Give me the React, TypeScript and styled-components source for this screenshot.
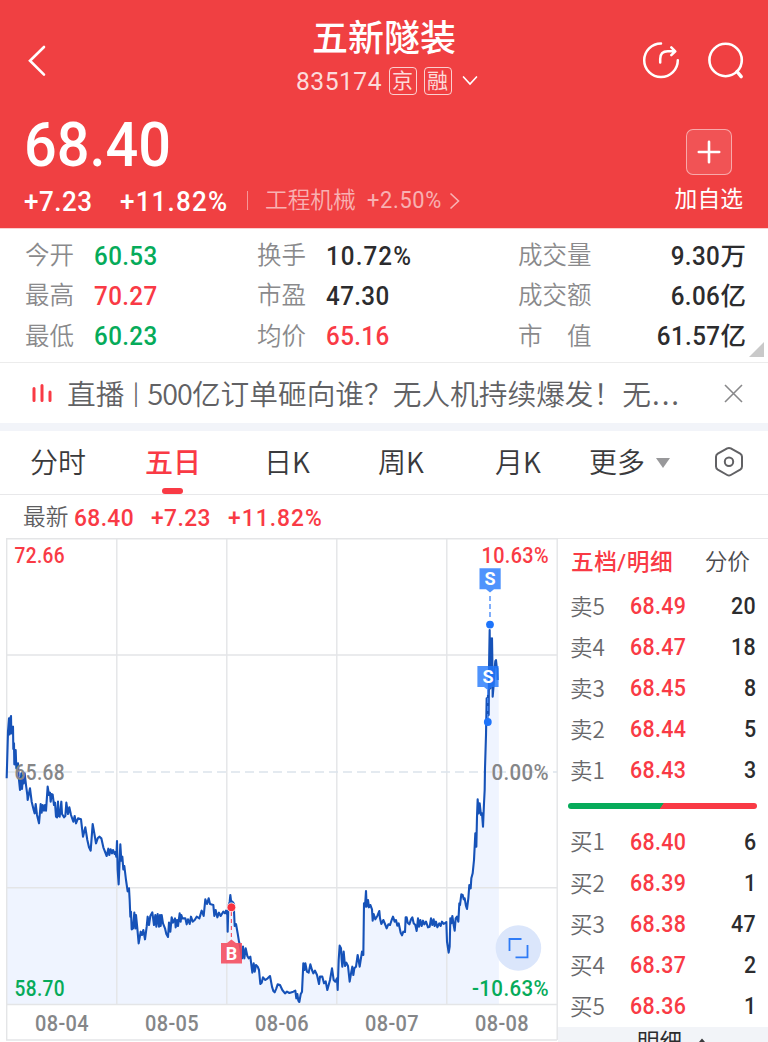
import React from 'react';
import styled, { createGlobalStyle } from 'styled-components';

const RED = '#f93a45';
const GREEN = '#06ab5a';
const INK = '#2c2c2e';

const GlobalStyle = createGlobalStyle`
  body {
    margin: 0;
    background: #fff;
    font-family: Roboto, 'Noto Sans CJK SC', sans-serif;
    line-height: 1.3;
    color: ${INK};
  }
`;

const Page = styled.main`
  width: 768px;
  height: 1042px;
  overflow: hidden;
  display: flex;
  flex-direction: column;
  white-space: nowrap;
`;

interface NumProps {
  $size: number;
  $color?: string;
  $weight?: number;
  $track?: number;
  $width?: number;
  $end?: boolean;
}

/* Slightly narrowed numerals. */
const Num = styled.span<NumProps>`
  display: inline-block;
  flex-shrink: 0;
  width: ${(p) => (p.$width ? `${p.$width}px` : 'auto')};
  font-family: Roboto, 'Noto Sans CJK SC', sans-serif;
  font-size: ${(p) => p.$size}px;
  font-weight: ${(p) => p.$weight ?? 500};
  letter-spacing: ${(p) => p.$track ?? 0.016}em;
  color: ${(p) => p.$color ?? 'inherit'};
  transform: scaleX(0.93);
  transform-origin: ${(p) => (p.$end ? 'right' : 'left')} center;
`;

const Unit = styled.span`
  font-size: 25.5px;
  font-weight: 500;
`;

/* ---------- Header ---------- */

const Header = styled.header`
  height: 228px;
  box-sizing: border-box;
  background: #f04042;
  color: #fff;
  box-shadow: 0 1px 0 #fbcfcf;
  display: flex;
  flex-direction: column;
  flex-shrink: 0;
`;

const TopBar = styled.div`
  height: 115px;
  display: grid;
  grid-template-columns: 160px 1fr 160px;
`;

const BackButton = styled.div`
  padding: 44px 0 0 26px;
`;

const TitleBlock = styled.div`
  display: flex;
  flex-direction: column;
  align-items: center;
  padding-top: 14px;
`;

const Title = styled.h1`
  margin: 0;
  font-size: 36px;
  line-height: 50px;
  font-weight: 500;
`;

const CodeRow = styled.div`
  display: flex;
  align-items: center;
  height: 34px;
  padding-left: 5px;
  color: rgba(255, 255, 255, 0.82);
`;

const Badge = styled.span`
  box-sizing: border-box;
  width: 28px;
  height: 28px;
  margin-left: 7px;
  border: 1px solid rgba(255, 255, 255, 0.75);
  border-radius: 4px;
  font-size: 21px;
  line-height: 27px;
  text-align: center;
`;

const TopActions = styled.div`
  display: flex;
  gap: 26px;
  padding: 41px 0 0 33px;
`;

const QuoteBlock = styled.div`
  display: flex;
  justify-content: space-between;
  padding: 0 25px 0 24px;
`;

const PriceColumn = styled.div`
  display: flex;
  flex-direction: column;
`;

const Price = styled(Num)`
  line-height: 60px;
`;

const ChangeRow = styled.div`
  display: flex;
  align-items: center;
  height: 30px;
  margin-top: 12px;
`;

const Sector = styled.div`
  display: flex;
  align-items: center;
  margin-bottom: 3px;
  padding-left: 18px;
  font-size: 22.7px;
  font-weight: 350;
  color: rgba(255, 255, 255, 0.6);
  background: linear-gradient(rgba(255, 255, 255, 0.45), rgba(255, 255, 255, 0.45)) left center / 1px 19px no-repeat;
`;

const SectorName = styled.span`
  width: 102px;
`;

const AddColumn = styled.div`
  display: flex;
  flex-direction: column;
  align-items: center;
  padding-top: 14px;
`;

const AddButton = styled.div`
  box-sizing: border-box;
  width: 46px;
  height: 46px;
  display: grid;
  place-items: center;
  background: rgba(255, 255, 255, 0.1);
  border: 1px solid rgba(255, 255, 255, 0.5);
  border-radius: 7px;
`;

const AddLabel = styled.div`
  margin-top: 9px;
  font-size: 22.8px;
  line-height: 32px;
`;

/* ---------- Stats ---------- */

const Stats = styled.section`
  position: relative;
  box-sizing: border-box;
  height: 135px;
  flex-shrink: 0;
  display: grid;
  grid-template-columns: 232px 261px 228px;
  padding: 8px 0 0 25px;
  border-bottom: 1px solid #ececec;
`;

const StatColumn = styled.div`
  display: flex;
  flex-direction: column;
`;

const StatRow = styled.div`
  height: 40.2px;
  display: flex;
  align-items: center;
  & > ${Num} {
    padding-top: 1px;
  }
`;

const StatLabel = styled.span<{ $width: number; $grow: boolean }>`
  width: ${(p) => p.$width}px;
  flex-grow: ${(p) => (p.$grow ? 1 : 0)};
  font-size: 24.5px;
  font-weight: 350;
  color: #8a8a8c;
  white-space: pre;
`;

const Corner = styled.div`
  position: absolute;
  right: 4px;
  bottom: 5px;
  width: 15px;
  height: 15px;
  background: #c9c9c9;
  clip-path: polygon(100% 0, 100% 100%, 0 100%);
`;

/* ---------- News ---------- */

const News = styled.section`
  box-sizing: border-box;
  height: 68px;
  flex-shrink: 0;
  display: flex;
  align-items: center;
  padding: 0 25px 0 32px;
  border-bottom: 8px solid #f2f4f9;
`;

const NewsText = styled.div`
  display: flex;
  width: 640px;
  margin: 0 auto 1px 14px;
  font-family: 'Noto Sans CJK SC', sans-serif;
  font-size: 28.7px;
  line-height: 40px;
  font-weight: 350;
  color: #616164;
`;

const NewsBar = styled.span`
  width: 23px;
  font-size: 22px;
  line-height: 37px;
  font-weight: 400;
  text-align: center;
`;

const NewsDigits = styled.span`
  letter-spacing: -0.9px;
`;

const Dots = styled.span`
  margin-left: 1px;
  letter-spacing: 2px;
`;

/* ---------- Tabs ---------- */

const Tabs = styled.nav`
  box-sizing: border-box;
  height: 64px;
  flex-shrink: 0;
  display: flex;
  padding-left: 30px;
  border-bottom: 1px solid #e8e8ea;
`;

const Tab = styled.div<{ $width: number; $active?: boolean }>`
  width: ${(p) => p.$width}px;
  padding-bottom: 3px;
  font-family: 'Noto Sans CJK SC', sans-serif;
  font-size: 28px;
  line-height: 60px;
  font-weight: ${(p) => (p.$active ? 500 : 350)};
  color: ${(p) => (p.$active ? RED : '#3a3a3c')};
  display: flex;
  align-items: center;
`;

const ActiveLabel = styled.span`
  position: relative;
  &::after {
    content: '';
    position: absolute;
    left: 17px;
    bottom: -3px;
    width: 21px;
    height: 6px;
    border-radius: 3px;
    background: ${RED};
  }
`;

const Caret = styled.i`
  margin: 3px 0 0 11px;
  border: 7px solid transparent;
  border-top: 10px solid #98989a;
  border-bottom: 0;
`;

const LatestRow = styled.div`
  height: 43px;
  flex-shrink: 0;
  display: flex;
  align-items: center;
  padding: 2px 0 0 23px;
  box-sizing: border-box;
`;

const LatestLabel = styled.span`
  width: 50.5px;
  font-size: 22.7px;
  font-weight: 350;
  color: #5d5d60;
`;

/* ---------- Chart and order book ---------- */

const Board = styled.section`
  display: flex;
  height: 504px;
  flex-shrink: 0;
`;

const Book = styled.aside`
  box-sizing: border-box;
  width: 210px;
  border-top: 1px solid #e8e8ea;
  display: flex;
  flex-direction: column;
`;

const BookTabs = styled.div`
  height: 47px;
  padding: 0 18px 0 13px;
  display: flex;
  align-items: center;
  justify-content: space-between;
  font-size: 22.7px;
`;

const BookTab = styled.span<{ $active?: boolean }>`
  font-weight: ${(p) => (p.$active ? 500 : 350)};
  letter-spacing: ${(p) => (p.$active ? 0.5 : 0)}px;
  color: ${(p) => (p.$active ? RED : '#4c4c4f')};
`;

const BookRow = styled.div`
  height: 41.3px;
  box-sizing: border-box;
  display: grid;
  grid-template-columns: 60px 1fr auto;
  align-items: center;
  padding: 1px 12px 0 12px;
`;

const Side = styled.span`
  padding-bottom: 4px;
  font-family: 'Noto Sans CJK SC', sans-serif;
  font-size: 22.5px;
  line-height: 30px;
  font-weight: 350;
  color: #69696c;
`;

const Ratio = styled.div`
  height: 6px;
  margin: 12px 11px 12px 10px;
  border-radius: 3px;
  background: linear-gradient(124deg, ${GREEN} 49.4%, ${RED} 49.8%);
`;

const BookFooter = styled.div`
  margin-top: auto;
  height: 15px;
  overflow: hidden;
  background: #f2f4f8;
  padding-left: 79px;
  font-size: 22.5px;
  line-height: 31px;
  display: flex;
  gap: 14px;
`;

type Stat = { label: string; value: string; unit?: string; color?: string; track?: number };

const STAT_COLUMNS: Stat[][] = [
  [
    { label: '今开', value: '60.53', color: GREEN },
    { label: '最高', value: '70.27', color: RED },
    { label: '最低', value: '60.23', color: GREEN },
  ],
  [
    { label: '换手', value: '10.72%', track: 0.045 },
    { label: '市盈', value: '47.30' },
    { label: '均价', value: '65.16', color: RED },
  ],
  [
    { label: '成交量', value: '9.30', unit: '万' },
    { label: '成交额', value: '6.06', unit: '亿' },
    { label: '市　值', value: '61.57', unit: '亿' },
  ],
];

const SELLS = [['卖5', '68.49', '20'], ['卖4', '68.47', '18'], ['卖3', '68.45', '8'], ['卖2', '68.44', '5'], ['卖1', '68.43', '3']];
const BUYS = [['买1', '68.40', '6'], ['买2', '68.39', '1'], ['买3', '68.38', '47'], ['买4', '68.37', '2'], ['买5', '68.36', '1']];

/* Price samples, in thirds of a pixel, grouped by chart section. */
type Section = { x: number; y: number; points: number[] };
const SECTIONS: Section[] = [
  { x: 0, y: 0, points: [20,730,24,590,27,550,29,598,31,550,33,543,34,595,36,580,39,575,40,642,42,625,43,688,47,645,49,700,54,685,56,725,60,765,64,715,66,762,69,722,71,745,74,715,78,750,82,780] },
  { x: 0, y: 765, points: [83,30,90,-5,95,35,101,60,104,70,107,42,111,75,117,100,122,42,125,68,128,45,132,62,135,45,138,62,143,-10,147,15,150,8,152,35,155,12,158,14,162,45,165,38,168,80,171,82,174,35,176,78,179,80,184,35,186,72,192,82,196,78,199,38,204,72,208,52,213,75,220,95,224,78,228,100,234,85,243,88,249,140,256,112,262,150,267,172,272,182,278,102,283,130,288,160,293,145,298,140,304,145,310,172,320,198,325,176,328,195,332,178,336,190,339,180,344,192,346,186,349,200,351,153,353,240,356,283,361,163,364,212,367,200,370,238,373,228,378,270,383,304,387,295,389,330,391,380,393,365,395,418,399,415,403,368,406,415,408,375,412,415,416,460,422,425,426,435,430,420,435,448,440,410,443,380,447,405,451,378,457,367,462,405,466,375,469,410,473,372,477,410,480,375,482,408,485,375,489,400,495,415,499,432,504,441,507,398,511,425,515,382,519,398,525,385,527,412,531,390,534,408,539,370,542,395,544,375,547,385,556,385,560,403,564,388,569,402,573,380,578,395,584,390,590,380,598,385,605,362,611,378,616,328,621,342,626,325,630,342,640,345,643,378,647,360,652,382,657,368,662,378,670,365,675,370,678,362,682,375,683,425,685,350,689,335,691,315,694,340,697,335,701,340,704,408,708,402,713,430,717,455] },
  { x: 660, y: 765, points: [58,458,62,480,66,505,69,470,73,505,77,475,82,498,86,505,91,500,97,548,101,520,104,545,108,525,113,530,117,540,121,582,125,578,129,562,136,570,143,565,150,558,156,590,160,603,164,607,169,595,173,583,180,585,187,600,195,610,201,605,208,609,220,605,226,602,229,625,232,612,235,632,238,636,242,613,246,605,250,520,254,540,256,520,261,545,266,548,271,523,276,540,280,550,285,542,291,555,297,582,300,560,307,560,312,580,317,574,322,600,330,570,336,535,341,570,346,575,351,565,353,600,356,510,359,467,363,475,365,510,367,530,371,485,375,528,379,518,384,528,389,575,394,545,397,530,400,555,403,535,408,530,413,495,419,530,426,485,430,495,432,340,435,350,438,303,440,350,444,330,447,352,451,345,456,358,458,392,461,372,466,388,472,378,478,363,480,385,484,402,490,390,495,402,500,415,505,403,510,405,515,390,519,380,524,395,528,390,532,407,536,400,542,428,546,436,550,425,555,426] },
  { x: 1200, y: 765, points: [17,382,20,382,23,398,28,403,33,388,37,382,41,400,46,405,50,423,54,385,57,410,61,390,65,408,69,392,73,403,78,395,84,412,89,410,93,385,97,405,101,388,104,408,108,395,112,412,118,400,122,408,126,395,131,402,139,396,141,455,146,488,149,470,151,385,154,400,157,378,161,405,164,422,167,385,171,380,175,395,178,340,180,345,184,313,188,315,191,328,194,325,198,348,201,357,205,325,208,285,212,295,214,265,218,250,222,210,226,130,229,170,231,80,233,28,236,70,239,40,243,75,246,70,249,110,252,40,254,0] },
  { x: 1200, y: 0, points: [255,700,258,600,260,490,262,565,264,480,266,540,267,400,269,285,271,460,272,310,274,450,276,310,277,370,278,485,281,450,284,400,286,378,288,375,290,395,292,400,293,435] },
];

const LINE = SECTIONS.flatMap((s) => {
  const out: string[] = [];
  for (let i = 0; i < s.points.length; i += 2) {
    out.push(`${((s.x + s.points[i]) / 3).toFixed(2)},${(535 + (s.y + s.points[i + 1]) / 3).toFixed(2)}`);
  }
  return out;
}).join(' ');

const AxisText = styled.text`
  font-family: Roboto, sans-serif;
  font-size: 21.2px;
  font-weight: 500;
  letter-spacing: 0.4px;
`;

const MarkText = styled.text`
  font-family: Roboto, sans-serif;
  font-size: 18px;
  font-weight: 700;
  text-anchor: middle;
  fill: #fff;
`;

function AxisLabel({ x, y, width, color, children }: { x: number; y: number; width: number; color: string; children: string }) {
  return (
    <AxisText x={x} y={y} fill={color} textLength={width} lengthAdjust="spacingAndGlyphs">
      {children}
    </AxisText>
  );
}

function FiveDayChart() {
  return (
    <svg width="558" height="504" viewBox="0 538 558 504">
      <polygon points={`6.5,1004 ${LINE} 498.7,745 498.7,1004`} fill="#eff4ff" />
      <rect x="490" y="690" width="8.7" height="314" fill="#eff4ff" />
      <g stroke="#e4e5e7" strokeWidth="1.4" fill="none">
        <path d="M6 538.7H558M6 655H557M6 887.7H557M6 1004.5H557M6 1040H557" />
        <path d="M6.7 538V1040M116.8 538V1004M226.8 538V1004M336.8 538V1004M446.8 538V1004M557.2 538V1040" />
      </g>
      <path d="M7 772H557" stroke="#dbe3ec" strokeWidth="1.6" strokeDasharray="9 5" />
      <polyline points={LINE} fill="none" stroke="#1652b8" strokeWidth="2.1" strokeLinejoin="round" />

      <AxisLabel x={14.5} y={563.3} width={50.5} color={RED}>72.66</AxisLabel>
      <AxisLabel x={481.5} y={563.3} width={67.5} color={RED}>10.63%</AxisLabel>
      <AxisLabel x={14.5} y={779.9} width={50.5} color="#858688">65.68</AxisLabel>
      <AxisLabel x={491.5} y={779.9} width={57.5} color="#858688">0.00%</AxisLabel>
      <AxisLabel x={14.5} y={996.3} width={50.5} color={GREEN}>58.70</AxisLabel>
      <AxisLabel x={472} y={996.3} width={77} color={GREEN}>-10.63%</AxisLabel>
      {['08-04', '08-05', '08-06', '08-07', '08-08'].map((d, i) => (
        <AxisLabel key={d} x={35 + i * 110} y={1031} width={54} color="#858688">{d}</AxisLabel>
      ))}

      <path d="M490 596V620" stroke="#4a8cf8" strokeWidth="1.4" strokeDasharray="5 3" />
      <path d="M487.7 690V718" stroke="#4a8cf8" strokeWidth="1.2" strokeDasharray="5 3" />
      <circle cx="490" cy="624.6" r="3.9" fill="#1e74fa" />
      <circle cx="487.8" cy="722" r="3.9" fill="#1e74fa" />
      <path d="M479.5 568.3H500.7V589.3H494L490 592.5L486 589.3H479.5Z" fill="#2378fb" fillOpacity="0.8" />
      <MarkText x="490.1" y="585.3">S</MarkText>
      <path d="M477.4 666H498.6V687H492L488 690.2L484 687H477.4Z" fill="#2378fb" fillOpacity="0.8" />
      <MarkText x="488" y="683">S</MarkText>

      <path d="M231.4 912V939" stroke="#f4566a" strokeWidth="1.2" strokeDasharray="4 3" />
      <circle cx="231.4" cy="907.3" r="4.4" fill="#f93340" stroke="#fff" strokeWidth="0.8" />
      <path d="M221 943H227L231.4 939.5L236 943H242V963.6H221Z" fill="#f54a5c" fillOpacity="0.88" />
      <MarkText x="231.4" y="959.6">B</MarkText>

      <circle cx="518.4" cy="948" r="22.8" fill="#dbe6fb" />
      <path d="M509.5 951V939H521.5M527.5 945V957.3H515.5" stroke="#2f7bf6" strokeWidth="1.8" fill="none" />
    </svg>
  );
}

function BookRows({ rows }: { rows: string[][] }) {
  return (
    <>
      {rows.map(([side, price, qty]) => (
        <BookRow key={side}>
          <Side>{side}</Side>
          <Num $size={23} $color={RED}>{price}</Num>
          <Num $size={23} $end>{qty}</Num>
        </BookRow>
      ))}
    </>
  );
}

export default function App() {
  return (
    <Page>
      <GlobalStyle />
      <Header>
        <TopBar>
          <BackButton>
            <svg width="22" height="34" viewBox="0 0 22 34" fill="none" stroke="#fff" strokeWidth="2.6" strokeLinecap="round">
              <path d="M18 3L4 16.8L18 30.6" />
            </svg>
          </BackButton>
          <TitleBlock>
            <Title>五新隧装</Title>
            <CodeRow>
              <Num $size={26.5} $weight={400} $width={86} $track={0.02}>835174</Num>
              <Badge>京</Badge>
              <Badge>融</Badge>
              <svg width="16" height="12" viewBox="0 0 16 12" fill="none" stroke="#fff" strokeWidth="1.7" strokeLinecap="round" style={{ marginLeft: 10 }}>
                <path d="M1.5 2L8 9L14.5 2" />
              </svg>
            </CodeRow>
          </TitleBlock>
          <TopActions>
            <svg width="40" height="40" viewBox="0 0 40 40" fill="none" stroke="#fff" strokeWidth="2.5" strokeLinecap="round" strokeLinejoin="round">
              <path d="M20 2.5A16.8 16.8 0 1 0 36.8 19.3" />
              <path d="M19.2 21.6V18Q19.2 10.3 26.8 10.3H34M30.3 6.3L34.3 10.3L30.3 14.1" />
            </svg>
            <svg width="40" height="40" viewBox="0 0 40 40" fill="none" stroke="#fff" strokeWidth="2.6" strokeLinecap="round">
              <circle cx="18.6" cy="19" r="16.2" />
              <path d="M30 30.5L34.2 35.6" strokeWidth="3.4" />
            </svg>
          </TopActions>
        </TopBar>
        <QuoteBlock>
          <PriceColumn>
            <Price $size={62} $track={0}>68.40</Price>
            <ChangeRow>
              <Num $size={28} $width={96} $track={0.018}>+7.23</Num>
              <Num $size={28} $width={127} $track={0.045}>+11.82%</Num>
              <Sector>
                <SectorName>工程机械</SectorName>
                <Num $size={23.5} $weight={400} $width={82} $track={0.03}>+2.50%</Num>
                <svg width="12" height="18" viewBox="0 0 12 18" fill="none" stroke="currentColor" strokeWidth="1.6">
                  <path d="M1.5 1.5L9.5 9L1.5 16.5" />
                </svg>
              </Sector>
            </ChangeRow>
          </PriceColumn>
          <AddColumn>
            <AddButton>
              <svg width="24" height="24" viewBox="0 0 24 24" stroke="#fff" strokeWidth="2.6" strokeLinecap="round">
                <path d="M12 1.8V22.2M1.8 12H22.2" />
              </svg>
            </AddButton>
            <AddLabel>加自选</AddLabel>
          </AddColumn>
        </QuoteBlock>
      </Header>

      <Stats>
        {STAT_COLUMNS.map((rows, i) => (
          <StatColumn key={i}>
            {rows.map((stat) => (
              <StatRow key={stat.label}>
                <StatLabel $width={i === 2 ? 90 : 69} $grow={i === 2}>{stat.label}</StatLabel>
                <Num $size={26} $color={stat.color} $track={stat.track} $end={i === 2}>{stat.value}</Num>
                {stat.unit && <Unit>{stat.unit}</Unit>}
              </StatRow>
            ))}
          </StatColumn>
        ))}
        <Corner />
      </Stats>

      <News>
        <svg width="21" height="20" viewBox="0 0 21 20" stroke={RED} strokeWidth="3" strokeLinecap="round">
          <path d="M2 5.5V17.5M10 2.5V17.5M18 9V17.5" />
        </svg>
        <NewsText>
          直播<NewsBar>|</NewsBar><NewsDigits>500</NewsDigits>亿订单砸向谁？无人机持续爆发！无<Dots>...</Dots>
        </NewsText>
        <svg width="19" height="19" viewBox="0 0 19 19" stroke="#88888a" strokeWidth="1.6">
          <path d="M1 1L18 18M18 1L1 18" />
        </svg>
      </News>

      <Tabs>
        <Tab $width={115}>分时</Tab>
        <Tab $width={119} $active><ActiveLabel>五日</ActiveLabel></Tab>
        <Tab $width={114}>日K</Tab>
        <Tab $width={117}>周K</Tab>
        <Tab $width={94}>月K</Tab>
        <Tab $width={125}>更多<Caret /></Tab>
        <svg width="30" height="32" viewBox="0 0 30 32" fill="none" stroke="#616164" strokeWidth="2" strokeLinejoin="round" style={{ marginTop: 15 }}>
          <path d="M13.2 2.4Q15 1.4 16.8 2.4L26.2 7.7Q28 8.8 28 10.8V20.6Q28 22.6 26.2 23.7L16.8 29Q15 30 13.2 29L3.8 23.7Q2 22.6 2 20.6V10.8Q2 8.8 3.8 7.7Z" />
          <circle cx="15" cy="15.7" r="4.2" />
        </svg>
      </Tabs>

      <LatestRow>
        <LatestLabel>最新</LatestLabel>
        <Num $size={24.5} $color={RED} $width={77}>68.40</Num>
        <Num $size={24.5} $color={RED} $width={77} $track={0.018}>+7.23</Num>
        <Num $size={24.5} $color={RED} $track={0.045}>+11.82%</Num>
      </LatestRow>

      <Board>
        <FiveDayChart />
        <Book>
          <BookTabs>
            <BookTab $active>五档/明细</BookTab>
            <BookTab>分价</BookTab>
          </BookTabs>
          <BookRows rows={SELLS} />
          <Ratio />
          <BookRows rows={BUYS} />
          <BookFooter>
            <span>明细</span>
            <svg width="12" height="15" viewBox="0 0 12 15" fill="#3a3a3c">
              <path d="M6 11.5L9 15H3Z" />
            </svg>
          </BookFooter>
        </Book>
      </Board>
    </Page>
  );
}
